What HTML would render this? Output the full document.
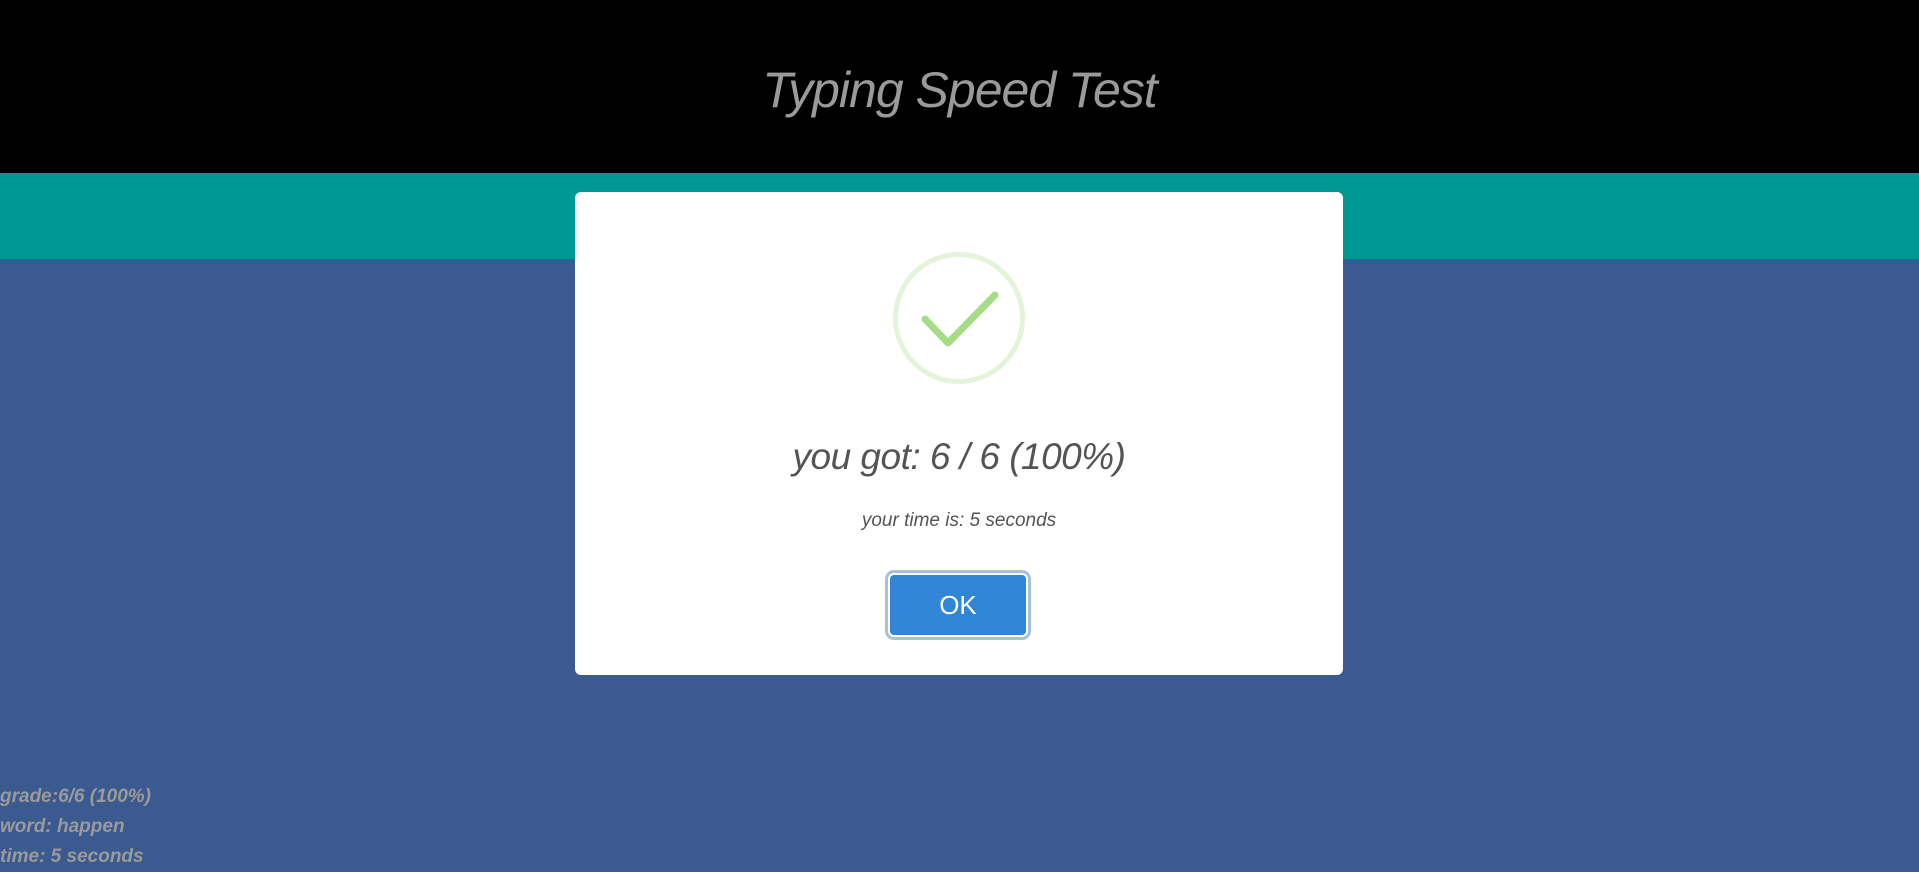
<!DOCTYPE html>
<html><head><style>
html,body{margin:0;padding:0;width:1919px;height:865px;overflow:hidden;background:#3b5a8f;font-family:"Liberation Sans",sans-serif;}
.hdr{position:absolute;left:0;top:0;width:1919px;height:173px;background:#000;}
.hdr h1{margin:0;position:absolute;left:0;right:0;top:60px;text-align:center;font-size:50px;font-style:italic;font-weight:normal;color:#9a9a9a;line-height:60px;letter-spacing:-1px;}
.teal{position:absolute;left:0;top:173px;width:1919px;height:86px;background:#009797;}
.modal{position:absolute;left:575px;top:192px;width:768px;height:483px;background:#fff;border-radius:6px;}
.circ{position:absolute;left:318px;top:60px;width:122px;height:122px;border:5px solid #e3f4da;border-radius:50%;}
.big{position:absolute;left:0;right:0;top:244px;text-align:center;font-size:37px;font-style:italic;color:#545454;letter-spacing:-0.5px;}
.small{position:absolute;left:0;right:0;top:318px;text-align:center;font-size:19px;font-style:italic;color:#545454;}
.btn{position:absolute;left:313px;top:381px;width:136px;height:60px;border-radius:6px;background:#3085d6;border:2px solid #fff;box-shadow:0 0 0 3px #a9c0d9;color:#fff;font-size:26px;text-align:center;line-height:60px;}
.side{position:absolute;left:0;top:782px;color:#9a9a9a;font-size:19px;font-style:italic;font-weight:bold;line-height:30px;}
</style></head><body>
<div class="hdr"><h1>Typing Speed Test</h1></div>
<div class="teal"></div>
<div class="modal">
<div class="circ"></div>
<svg style="position:absolute;left:0;top:0" width="768" height="300"><path d="M350 127 L373 151 L420 103" fill="none" stroke="#a5dc86" stroke-width="7" stroke-linecap="round" stroke-linejoin="round"/></svg>
<div class="big">you got: 6 / 6 (100%)</div>
<div class="small">your time is: 5 seconds</div>
<div class="btn">OK</div>
</div>
<div class="side">grade:6/6 (100%)<br>word: happen<br>time: 5 seconds</div>
</body></html>
